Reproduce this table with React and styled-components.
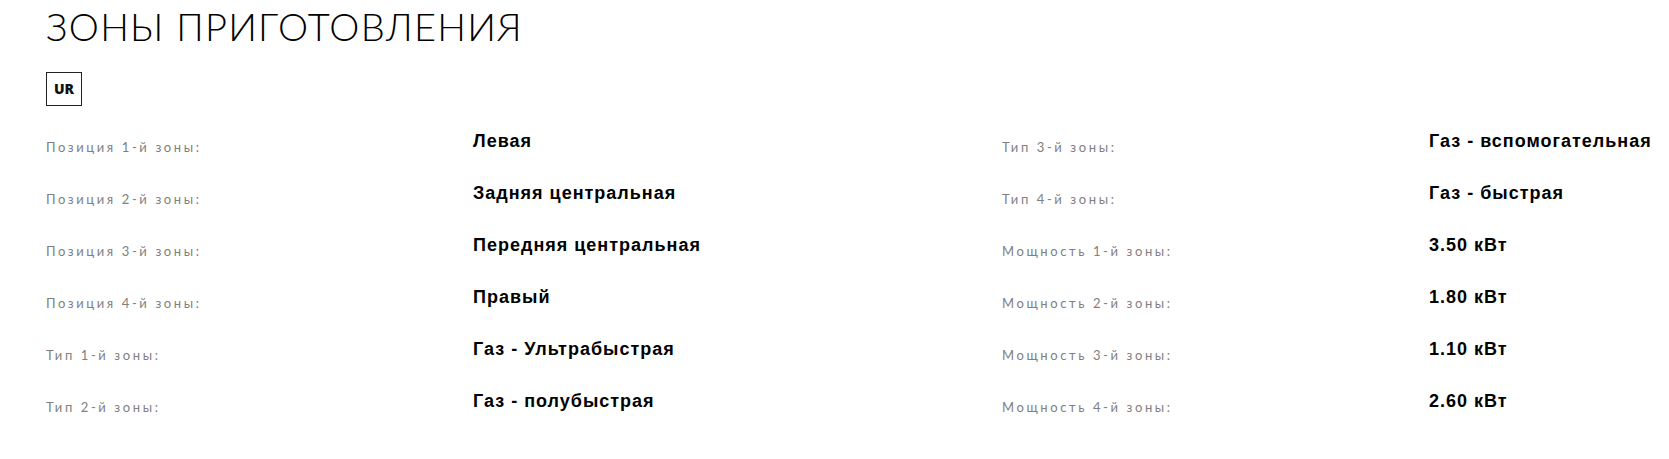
import React from "react";
import styled, { createGlobalStyle } from "styled-components";

const GlobalStyle = createGlobalStyle`
    body {
        margin: 0;
        background: #ffffff;
    }
`;

const leftSpecs = [
    { label: "Позиция 1-й зоны:", value: "Левая" },
    { label: "Позиция 2-й зоны:", value: "Задняя центральная" },
    { label: "Позиция 3-й зоны:", value: "Передняя центральная" },
    { label: "Позиция 4-й зоны:", value: "Правый" },
    { label: "Тип 1-й зоны:", value: "Газ - Ультрабыстрая" },
    { label: "Тип 2-й зоны:", value: "Газ - полубыстрая" },
];

const rightSpecs = [
    { label: "Тип 3-й зоны:", value: "Газ - вспомогательная" },
    { label: "Тип 4-й зоны:", value: "Газ - быстрая" },
    { label: "Мощность 1-й зоны:", value: "3.50 кВт" },
    { label: "Мощность 2-й зоны:", value: "1.80 кВт" },
    { label: "Мощность 3-й зоны:", value: "1.10 кВт" },
    { label: "Мощность 4-й зоны:", value: "2.60 кВт" },
];

const SpecColumn = ({ items }) => (
    <Column>
        {items.map((item) => (
            <Row key={item.label}>
                <Label>{item.label}</Label>
                <Value>{item.value}</Value>
            </Row>
        ))}
    </Column>
);

const App = () => {
    return (
        <Container>
            <GlobalStyle />
            <Title>ЗОНЫ ПРИГОТОВЛЕНИЯ</Title>
            <Badge>UR</Badge>
            <Specs>
                <SpecColumn items={leftSpecs} />
                <SpecColumn items={rightSpecs} />
            </Specs>
        </Container>
    );
};

export default App;

const Container = styled.div`
    padding: 4px 0 0 46px;
    display: flex;
    flex-direction: column;
    align-items: flex-start;
`;

const Title = styled.h1`
    margin: 0;
    font-family: 'Lato', sans-serif;
    font-weight: 300;
    font-size: 38px;
    line-height: 1.2;
    letter-spacing: 1.25px;
    color: #000000;
`;

const Badge = styled.div`
    margin-top: 22px;
    width: 34px;
    height: 32px;
    border: 1.5px solid #222222;
    display: flex;
    align-items: center;
    justify-content: center;
    font-family: 'Open Sans', sans-serif;
    font-weight: 800;
    font-size: 14px;
    color: #111111;
`;

const Specs = styled.div`
    margin-top: 25px;
    display: grid;
    grid-template-columns: 956px 1fr;
    width: calc(100vw - 46px);
`;

const Column = styled.div`
    display: flex;
    flex-direction: column;
`;

const Row = styled.div`
    display: flex;
    align-items: flex-start;
    height: 52px;
`;

const Label = styled.div`
    width: 427px;
    flex-shrink: 0;
    padding-top: 6px;
    font-family: 'Lato', sans-serif;
    font-size: 13px;
    line-height: 20px;
    letter-spacing: 2.6px;
    color: #808080;
`;

const Value = styled.div`
    font-family: 'Liberation Sans', Arial, sans-serif;
    font-weight: 700;
    font-size: 18px;
    line-height: 20px;
    letter-spacing: 1px;
    color: #000000;
`;
